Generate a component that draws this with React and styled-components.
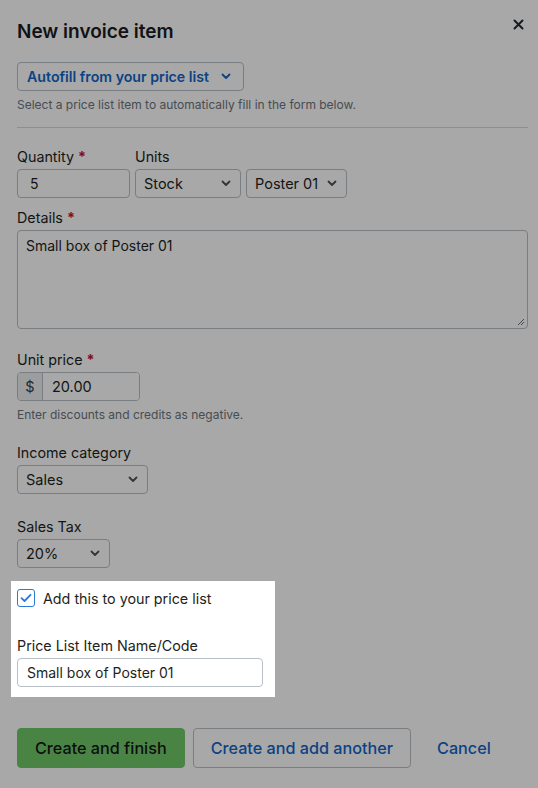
import React from 'react';
import styled, { createGlobalStyle } from 'styled-components';

const GlobalStyle = createGlobalStyle`
	html, body {
		margin: 0;
		background: #ffffff;
	}
	body {
		font-family: Inter, "Liberation Sans", sans-serif;
		color: #1d1f21;
		-webkit-font-smoothing: antialiased;
	}
	* {
		box-sizing: border-box;
	}
`;

const Modal = styled.div`
	position: relative;
	width: 538px;
	padding: 18px 10px 20px 17px;
`;

const Header = styled.header`
	display: flex;
	justify-content: space-between;
	align-items: flex-start;
	height: 28px;
`;

const Title = styled.h1`
	margin: 0;
	font-size: 19px;
	line-height: 28px;
	font-weight: 600;
	color: #1b1c1e;
`;

const CloseButton = styled.button`
	display: flex;
	align-items: center;
	justify-content: center;
	width: 20px;
	height: 20px;
	margin: -4px 0 0 0;
	padding: 0;
	border: none;
	background: none;
	color: #222a33;
`;

const AutofillButton = styled.button`
	display: flex;
	align-items: center;
	gap: 12px;
	height: 29px;
	margin-top: 16px;
	padding: 0 12px 0 9px;
	border: 1px solid #b8bfc6;
	border-radius: 4px;
	background: #fff;
	color: #1166c8;
	font-family: inherit;
	font-size: 14.2px;
	font-weight: 600;
`;

const Hint = styled.p`
	margin: ${p => p.$top || 5}px 0 0;
	font-size: 12px;
	line-height: 18px;
	color: #6c757d;
`;

const Divider = styled.hr`
	margin: 13px 0 0;
	border: none;
	border-top: 1px solid #d3d9de;
	width: 511px;
`;

const Row = styled.div`
	display: flex;
	gap: 5px;
	margin-top: ${p => p.$top || 0}px;
`;

const Field = styled.div`
	display: flex;
	flex-direction: column;
	margin-top: ${p => p.$top || 0}px;
`;

const Label = styled.label`
	font-size: 14.3px;
	line-height: 20px;
	height: 20px;
	margin-bottom: 2px;
	color: #1d1f21;
	white-space: nowrap;
`;

const Required = styled.span`
	color: #c8102e;
	margin-left: 4px;
	font-weight: 700;
`;

const TextInput = styled.div`
	display: flex;
	align-items: center;
	width: ${p => p.$width}px;
	height: 29px;
	padding: 0 ${p => p.$pad || 9}px;
	border: 1px solid #b8bfc6;
	border-radius: 4px;
	background: #fff;
	font-size: 14px;
	color: #1d1f21;
	white-space: nowrap;
`;

const TextArea = styled.div`
	position: relative;
	width: 511px;
	height: 99px;
	padding: 4px 8px;
	border: 1px solid #b8bfc6;
	border-radius: 4px;
	background: #fff;
	font-size: 14px;
	line-height: 22px;
`;

const Grip = styled.svg`
	position: absolute;
	right: 2px;
	bottom: 2px;
`;

const SelectBox = styled.div`
	display: flex;
	align-items: center;
	justify-content: space-between;
	width: ${p => p.$width}px;
	height: 29px;
	padding: 0 9px 0 8px;
	border: 1px solid #b8bfc6;
	border-radius: 4px;
	background: #fff;
	font-size: 14.5px;
	color: #1d1f21;
	white-space: nowrap;
`;

const PriceGroup = styled.div`
	display: flex;
	width: 123px;
	height: 29px;
	border: 1px solid #b8bfc6;
	border-radius: 4px;
	overflow: hidden;
	font-size: 14.5px;
`;

const Prefix = styled.span`
	display: flex;
	align-items: center;
	justify-content: center;
	width: 25px;
	background: #eceef0;
	border-right: 1px solid #b8bfc6;
	color: #3a3f44;
`;

const PriceValue = styled.span`
	display: flex;
	align-items: center;
	padding-left: 9px;
	background: #fff;
	flex: 1;
`;

const Spotlight = styled.section`
	position: relative;
	z-index: 1;
	width: 264px;
	margin: 13px 0 0 -6px;
	padding: 6px 12px 10px 6px;
	background: #fff;
	box-shadow: 0 0 0 3000px rgba(0, 0, 0, 0.341);
`;

const CheckRow = styled.label`
	display: flex;
	align-items: center;
	gap: 8px;
	height: 22px;
	font-size: 14.3px;
	color: #1d1f21;
`;

const CheckBox = styled.span`
	display: flex;
	align-items: center;
	justify-content: center;
	width: 18px;
	height: 18px;
	border: 1.5px solid #2b7bd3;
	border-radius: 3px;
	background: #fff;
`;

const Actions = styled.div`
	display: flex;
	align-items: center;
	gap: 8px;
	margin-top: 31px;
`;

const Button = styled.button`
	height: 40px;
	padding: 0 17px;
	border-radius: 4px;
	font-family: inherit;
	font-size: 16.2px;
	font-weight: 500;
	white-space: nowrap;
	border: 1px solid ${p => (p.$primary ? '#70c969' : p.$link ? 'transparent' : '#b8bfc6')};
	background: ${p => (p.$primary ? '#70c969' : 'transparent')};
	color: ${p => (p.$primary ? '#141618' : '#1166c8')};
`;

const Chevron = ({ color = '#4a5259' }) => (
	<svg width="10" height="7" viewBox="0 0 10 7">
		<path d="M1.5 1.5 L5 5 L8.5 1.5" fill="none" stroke={color} strokeWidth="1.8" strokeLinecap="round" strokeLinejoin="round" />
	</svg>
);

export default function App() {
	return (
		<>
			<GlobalStyle />
			<Modal>
				<Header>
					<Title>New invoice item</Title>
					<CloseButton aria-label="Close">
						<svg width="11" height="11" viewBox="0 0 11 11">
							<path d="M1.5 1.5 L9.5 9.5 M9.5 1.5 L1.5 9.5" stroke="currentColor" strokeWidth="2" strokeLinecap="round" />
						</svg>
					</CloseButton>
				</Header>

				<AutofillButton>
					Autofill from your price list
					<Chevron color="#1166c8" />
				</AutofillButton>
				<Hint>Select a price list item to automatically fill in the form below.</Hint>
				<Divider />

				<Row $top={19}>
					<Field>
						<Label>
							Quantity<Required>*</Required>
						</Label>
						<TextInput $width={113} $pad={12}>5</TextInput>
					</Field>
					<Field>
						<Label>Units</Label>
						<SelectBox $width={106}>
							Stock
							<Chevron />
						</SelectBox>
					</Field>
					<Field>
						<Label>&nbsp;</Label>
						<SelectBox $width={101}>
							Poster 01
							<Chevron />
						</SelectBox>
					</Field>
				</Row>

				<Field $top={10}>
					<Label>
						Details<Required>*</Required>
					</Label>
					<TextArea>
						Small box of Poster 01
						<Grip width="8" height="8" viewBox="0 0 8 8">
							<path d="M7 1 L1 7 M7 4 L4 7" stroke="#6b7177" strokeWidth="1" />
						</Grip>
					</TextArea>
				</Field>

				<Field $top={21}>
					<Label>
						Unit price<Required>*</Required>
					</Label>
					<PriceGroup>
						<Prefix>$</Prefix>
						<PriceValue>20.00</PriceValue>
					</PriceGroup>
				</Field>
				<Hint $top={5}>Enter discounts and credits as negative.</Hint>

				<Field $top={19}>
					<Label>Income category</Label>
					<SelectBox $width={131}>
						Sales
						<Chevron />
					</SelectBox>
				</Field>

				<Field $top={23}>
					<Label>Sales Tax</Label>
					<SelectBox $width={93}>
						20%
						<Chevron />
					</SelectBox>
				</Field>

				<Spotlight>
					<CheckRow>
						<CheckBox>
							<svg width="12" height="10" viewBox="0 0 12 10">
								<path d="M1.5 5.2 L4.5 8 L10.5 1.8" fill="none" stroke="#2b7bd3" strokeWidth="1.8" strokeLinecap="round" strokeLinejoin="round" />
							</svg>
						</CheckBox>
						Add this to your price list
					</CheckRow>
					<Field $top={27}>
						<Label>Price List Item Name/Code</Label>
						<TextInput $width={246}>Small box of Poster 01</TextInput>
					</Field>
				</Spotlight>

				<Actions>
					<Button $primary>Create and finish</Button>
					<Button>Create and add another</Button>
					<Button $link>Cancel</Button>
				</Actions>
			</Modal>
		</>
	);
}
